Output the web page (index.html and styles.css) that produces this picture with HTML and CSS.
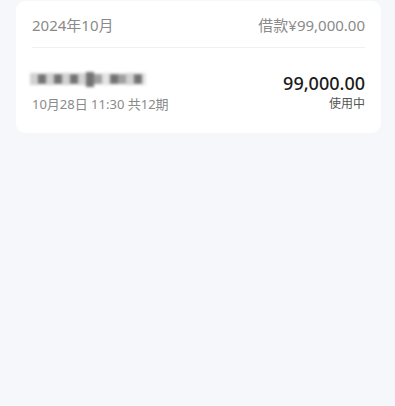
FILE: index.html
```html
<!DOCTYPE html>
<html lang="zh-CN">
<head>
<meta charset="utf-8">
<link rel="stylesheet" href="styles.css">
</head>
<body>
<div class="page">
  <div class="card">
    <div class="card-head">
      <span class="month">2024年10月</span>
      <span class="total">借款¥99,000.00</span>
    </div>
    <div class="item">
      <div class="item-left">
        <div class="mosaic">
          <i class="c1"></i><i class="c3"></i><i class="c1"></i><i class="c3"></i><i class="c1"></i><i class="c3"></i><i class="c1"></i><i class="c3 tall"></i><i class="c2"></i><i class="c0"></i><i class="c3"></i><i class="c2"></i><i class="c1"></i><i class="c3"></i><i class="c0 half"></i>
        </div>
        <div class="meta">10月28日 11:30 共12期</div>
      </div>
      <div class="item-right">
        <div class="amount">99,000.00</div>
        <div class="status">使用中</div>
      </div>
    </div>
  </div>
</div>
</body>
</html>
```

FILE: styles.css
```css
html, body {
  margin: 0;
  padding: 0;
  background: #f6f7fb;
  font-family: "Noto Sans", "Noto Sans CJK SC", sans-serif;
}
.page {
  padding: 1px 14px 0 16px;
  height: 405px;
}
.card {
  background: #ffffff;
  border-radius: 9px;
  padding: 0 16px;
}
.card-head {
  height: 46px;
  display: flex;
  align-items: center;
  justify-content: space-between;
  border-bottom: 1px solid #f0f0f2;
  color: #8a8a8a;
  font-size: 15px;
}
.item {
  height: 85px;
  display: flex;
  justify-content: space-between;
  align-items: center;
}
.item-left, .item-right {
  display: flex;
  flex-direction: column;
}
.item-right {
  align-items: flex-end;
}
.mosaic {
  display: flex;
  align-items: center;
  height: 16px;
  margin-left: -2px;
  margin-top: 2px;
  filter: blur(1.6px);
}
.mosaic i {
  display: block;
  width: 8px;
  height: 10px;
}
.mosaic .c0 { background: #e4e4e4; height: 12px; }
.mosaic .c1 { background: #d2d2d2; height: 12px; }
.mosaic .c2 { background: #a0a0a0; }
.mosaic .c3 { background: #737373; }
.mosaic .tall { height: 15px; }
.mosaic .half { width: 4px; }
.meta {
  margin-top: 9px;
  font-size: 13px;
  color: #8a8a8a;
  line-height: 16px;
}
.amount {
  font-size: 18px;
  font-weight: 500;
  color: #1a1a1a;
  line-height: 22px;
  margin-top: 2px;
}
.status {
  font-size: 12px;
  color: #555555;
  line-height: 16px;
  margin-top: 2px;
}
```
